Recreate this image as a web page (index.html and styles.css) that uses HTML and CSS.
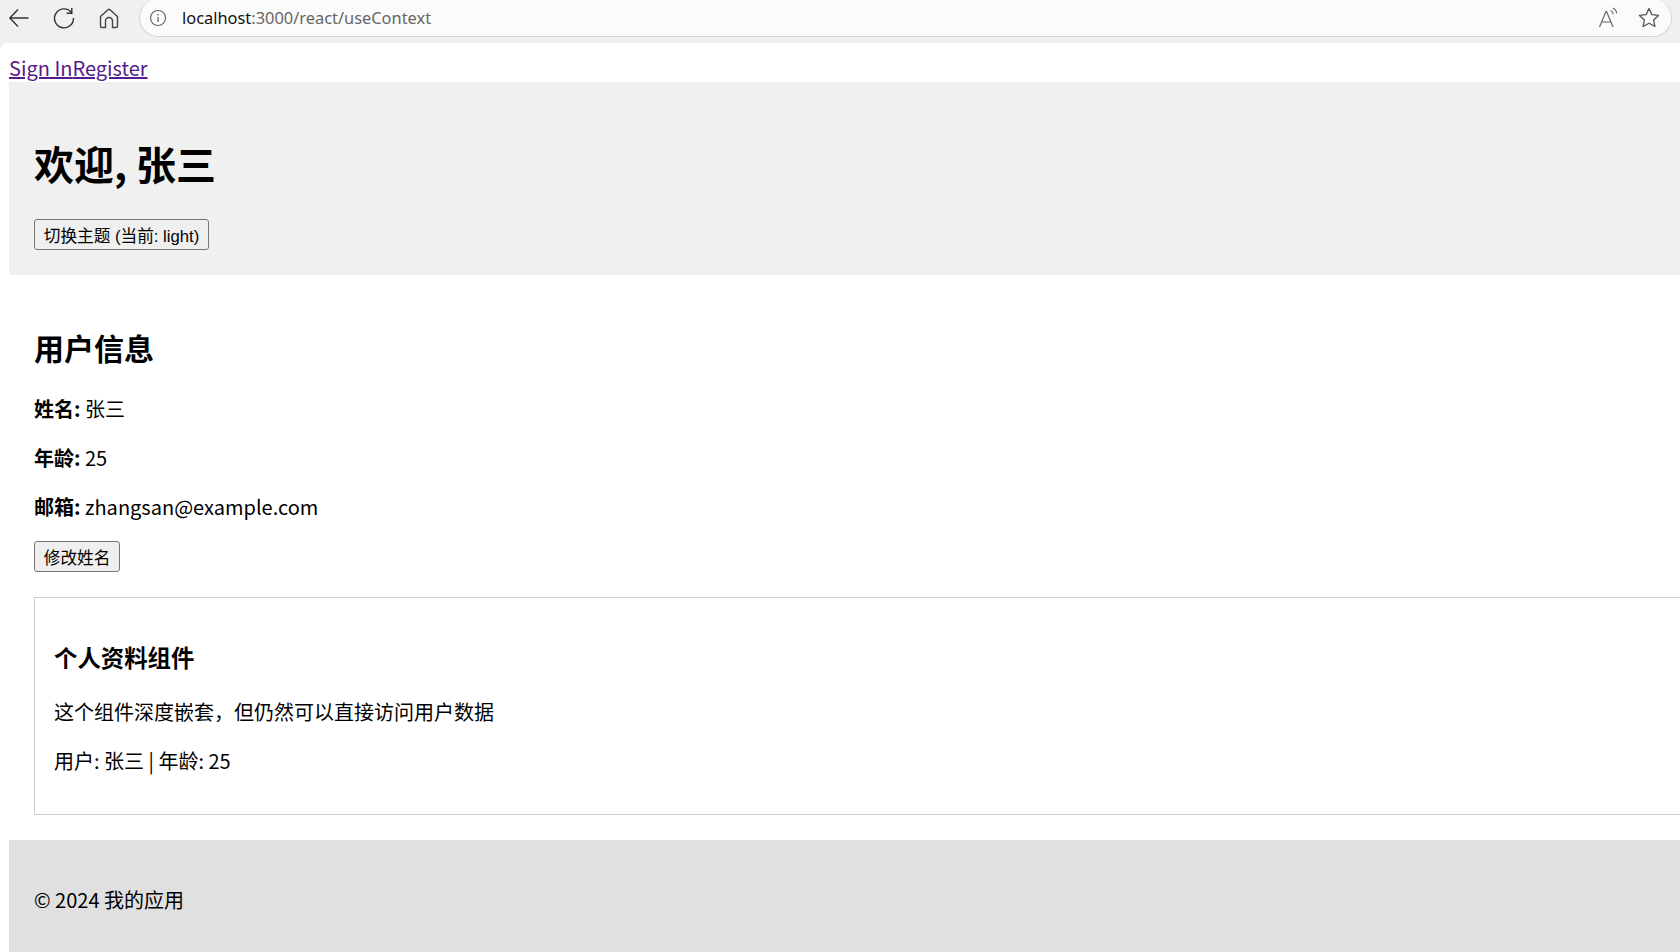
FILE: index.html
```html
<!DOCTYPE html>
<html lang="zh">
<head>
<meta charset="utf-8">
<title>useContext</title>
<link rel="stylesheet" href="styles.css">
</head>
<body>
<div class="toolbar">
  <button class="tool" aria-label="Back"><svg width="24" height="24" viewBox="0 0 24 24"><path d="M21.500 12H3M11 3.500 2.800 12l8.200 8.500" fill="none" stroke="#333" stroke-width="1.400"/></svg></button>
  <button class="tool" aria-label="Reload"><svg width="24" height="24" viewBox="0 0 24 24"><path d="M19.500 6.500A9.500 9.500 0 1 0 21.500 12M19.800 2v5.200h-5.200" fill="none" stroke="#333" stroke-width="1.400"/></svg></button>
  <button class="tool" aria-label="Home"><svg width="24" height="24" viewBox="0 0 24 24"><path d="M3.500 10.500 11 3.700a1.500 1.500 0 0 1 2 0l7.500 6.800V20a1.500 1.500 0 0 1-1.500 1.500h-3.500V15a3.500 3.500 0 0 0-7 0v6.500H5A1.500 1.500 0 0 1 3.500 20z" fill="none" stroke="#444" stroke-width="1.400"/></svg></button>
  <div class="omnibox">
    <svg class="info" width="18" height="18" viewBox="0 0 18 18"><circle cx="9" cy="9" r="7.500" fill="none" stroke="#666" stroke-width="1.200"/><path d="M9 8v5M9 5v1.500" stroke="#666" stroke-width="1.300"/></svg>
    <span class="url"><span class="host">localhost</span>:3000/react/useContext</span>
    <span class="omni-actions">
      <svg width="22" height="22" viewBox="0 0 22 22"><path d="M1.500 20 8 4.500h.6L15 20M4 15h9" fill="none" stroke="#666" stroke-width="1.200"/><path d="M12.500 3.500c1.700.8 2.600 2.100 2.800 3.800M14.800 1c2.300 1.100 3.700 3.100 4 5.500" fill="none" stroke="#666" stroke-width="1.100"/></svg>
      <svg width="22" height="22" viewBox="0 0 22 22"><path d="m11 1.500 2.900 6.100 6.600.8-4.900 4.500 1.300 6.600-5.900-3.300-5.900 3.300 1.300-6.600-4.900-4.500 6.600-.8z" fill="none" stroke="#555" stroke-width="1.300" stroke-linejoin="round"/></svg>
    </span>
  </div>
</div>
<div class="page">
  <nav class="nav"><a href="#a">Sign In</a><a href="#b">Register</a></nav>
  <div class="app">
    <header class="header">
      <h1>欢迎, 张三</h1>
      <button class="btn">切换主题 (当前: light)</button>
    </header>
    <main class="main">
      <h2>用户信息</h2>
      <p><strong>姓名:</strong> 张三</p>
      <p><strong>年龄:</strong> 25</p>
      <p><strong>邮箱:</strong> zhangsan@example.com</p>
      <button class="btn btn-plain">修改姓名</button>
      <section class="card">
        <h3>个人资料组件</h3>
        <p>这个组件深度嵌套，但仍然可以直接访问用户数据</p>
        <p>用户: 张三 | 年龄: 25</p>
      </section>
    </main>
    <footer class="footer">
      <p>© 2024 我的应用</p>
    </footer>
  </div>
</div>
</body>
</html>
```
FILE: styles.css
```css
html, body {
  margin: 0;
  height: 952px;
  overflow: hidden;
  background: #f0f0f0;
}
body {
  font-family: "Noto Sans CJK SC", "Noto Sans", sans-serif;
  font-size: 20px;
  color: #000;
}
.toolbar {
  height: 43px;
  display: flex;
  align-items: flex-start;
  background: #f0f0f0;
  box-sizing: border-box;
  padding-left: 7px;
}
.tool {
  width: 24px;
  height: 24px;
  margin: 6px 21px 0 0;
  padding: 0;
  border: 0;
  background: none;
  display: flex;
}
.tool:nth-child(3) { margin-right: 18px; }
.omnibox {
  flex: 1;
  height: 38px;
  margin-right: 8px;
  margin-top: -1px;
  display: flex;
  align-items: center;
  background: #fbfbfb;
  border: 1px solid #d2d2d2;
  border-top: 0;
  border-radius: 20px;
  box-sizing: border-box;
  padding-left: 9px;
}
.info { margin-right: 15px; }
.url {
  font-family: "Noto Sans", sans-serif;
  font-size: 16.4px;
  color: #666;
}
.host { color: #111; }
.omni-actions {
  margin-left: auto;
  margin-right: 11px;
  display: flex;
  gap: 18px;
}
.page {
  height: 909px;
  background: #fff;
  border-top-left-radius: 8px;
  padding-left: 9px;
  overflow: hidden;
}
.nav {
  height: 39px;
  box-sizing: border-box;
  padding-top: 10px;
  line-height: 29px;
}
.nav a { color: #551a8b; }
.header {
  background: #f0f0f0;
  padding: 25px;
  height: 193px;
  box-sizing: border-box;
}
h1 {
  font-size: 40px;
  line-height: 58px;
  margin: 27px 0;
}
.btn {
  display: block;
  font-family: "Liberation Sans", "Noto Sans CJK SC", sans-serif;
  font-size: 16.67px;
  height: 31px;
  padding: 0 8.75px;
  background: #efefef;
  border: 1.25px solid #767676;
  border-radius: 3px;
  color: #000;
}
.main {
  padding: 26px 0 25px 25px;
}
h2 {
  font-size: 30px;
  line-height: 43px;
  margin: 25px 0;
}
p {
  margin: 20px 0;
  line-height: 29px;
}
.btn-plain { font-family: "Noto Sans CJK SC", sans-serif; }
.card {
  margin-top: 25px;
  width: 1700px;
  height: 218px;
  box-sizing: border-box;
  border: 1px solid #ccc;
  padding: 0 0 0 19px;
  overflow: hidden;
}
h3 {
  font-size: 23.4px;
  line-height: 34px;
  margin: 42px 0 23px;
}
.footer {
  background: #e0e0e0;
  padding: 25px;
  height: 120px;
  box-sizing: border-box;
}
```
